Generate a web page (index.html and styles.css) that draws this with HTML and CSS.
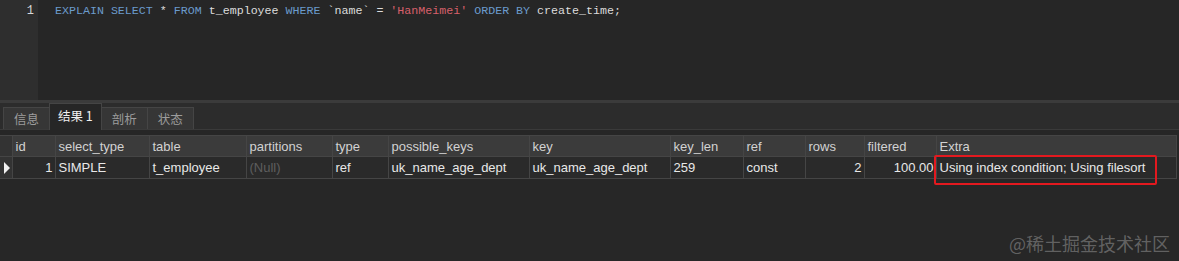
FILE: index.html
```html
<!DOCTYPE html>
<html lang="en">

<head>
  <meta charset="UTF-8">
  <meta name="viewport" content="width=device-width, initial-scale=1.0">
  <title>EXPLAIN</title>
  <link rel="stylesheet" href="styles.css">
</head>

<body>
  <div class="editor">
    <div class="gutter">1</div>
    <div class="code"><span class="kw">EXPLAIN SELECT</span> * <span class="kw">FROM</span> t_employee <span class="kw">WHERE</span> `name` = <span class="str">'HanMeimei'</span> <span class="kw">ORDER BY</span> create_time;</div>
  </div>
  <div class="splitter"></div>
  <div class="tabs">
    <div class="tab">信息</div>
    <div class="tab active">结果 1</div>
    <div class="tab">剖析</div>
    <div class="tab">状态</div>
  </div>
  <div class="result">
    <table class="grid">
      <colgroup>
        <col style="width: 12px">
        <col style="width: 43px">
        <col style="width: 94px">
        <col style="width: 97px">
        <col style="width: 86px">
        <col style="width: 56px">
        <col style="width: 141px">
        <col style="width: 141px">
        <col style="width: 73px">
        <col style="width: 62px">
        <col style="width: 59px">
        <col style="width: 72px">
        <col style="width: 240px">
      </colgroup>
      <thead>
        <tr>
          <th class="marker"></th>
          <th>id</th>
          <th>select_type</th>
          <th>table</th>
          <th>partitions</th>
          <th>type</th>
          <th>possible_keys</th>
          <th>key</th>
          <th>key_len</th>
          <th>ref</th>
          <th>rows</th>
          <th>filtered</th>
          <th>Extra</th>
        </tr>
      </thead>
      <tbody>
        <tr>
          <td class="marker"><span class="arrow"></span></td>
          <td class="num">1</td>
          <td>SIMPLE</td>
          <td>t_employee</td>
          <td class="null">(Null)</td>
          <td>ref</td>
          <td>uk_name_age_dept</td>
          <td>uk_name_age_dept</td>
          <td>259</td>
          <td>const</td>
          <td class="num">2</td>
          <td class="num">100.00</td>
          <td class="extra">Using index condition; Using filesort</td>
        </tr>
      </tbody>
    </table>
  </div>
  <div class="watermark">@稀土掘金技术社区</div>
</body>

</html>
```

FILE: styles.css
```css
html,
body {
  margin: 0;
  padding: 0;
  background-color: #272727;
  height: 261px;
  overflow: hidden;
  font-family: "Liberation Sans", "Noto Sans CJK SC", sans-serif;
}

* {
  box-sizing: border-box;
}

.editor {
  display: flex;
  height: 100px;
  background-color: #262626;
}

.gutter {
  width: 38px;
  padding: 3px 4px 0 0;
  background-color: #2e2e2e;
  color: #d8d8d8;
  font-family: "Liberation Mono", monospace;
  font-size: 12px;
  line-height: 16px;
  text-align: right;
}

.code {
  padding: 3px 0 0 17px;
  color: #dcdcdc;
  font-family: "Liberation Mono", monospace;
  font-size: 11.65px;
  line-height: 16px;
  white-space: pre;
}

.kw {
  color: #6b9bcc;
}

.str {
  color: #d7606b;
}

.splitter {
  height: 3px;
  background-color: #3b3b3b;
}

.tabs {
  display: flex;
  align-items: flex-end;
  height: 27px;
  padding-left: 3px;
  background-color: #2c2c2c;
  border-bottom: 1px solid #3a3a3a;
}

.tab {
  height: 22px;
  padding: 0 10px;
  background-color: #363636;
  border: 1px solid #454545;
  border-bottom: none;
  color: #9c9c9c;
  font-family: "Noto Sans CJK SC", sans-serif;
  font-size: 12.5px;
  line-height: 21px;
  margin-right: -1px;
}

.tab.active {
  height: 27px;
  margin-bottom: -1px;
  padding: 0 8px;
  background-color: #262626;
  color: #f0f0f0;
  line-height: 23px;
  position: relative;
  z-index: 1;
}

.result {
  padding-top: 5px;
  background-color: #262626;
}

.grid {
  border-collapse: collapse;
  table-layout: fixed;
  font-size: 13px;
}

.grid th,
.grid td {
  padding: 0 3px;
  text-align: left;
  white-space: nowrap;
  overflow: visible;
  border: 1px solid #454545;
}

.grid th {
  height: 21px;
  background-color: #3b3b3b;
  color: #d2d2d2;
  font-weight: normal;
}

.grid td {
  height: 22px;
  background-color: #2a2a2a;
  color: #e8e8e8;
}

.grid .marker {
  padding: 0;
  background-color: #333333;
  border-left: none;
}

.arrow {
  display: block;
  width: 0;
  height: 0;
  margin-left: 4px;
  border-top: 6px solid transparent;
  border-bottom: 6px solid transparent;
  border-left: 6px solid #f2f2f2;
}

.grid .num {
  text-align: right;
  padding-right: 2px;
}

.grid .null {
  color: #5e5e5e;
}

.extra {
  position: relative;
}

.extra::after {
  content: "";
  position: absolute;
  left: -3px;
  top: -2px;
  width: 219px;
  height: 26px;
  border: 2px solid #e3191f;
  border-radius: 2px;
}

.watermark {
  position: absolute;
  right: 9px;
  bottom: 7px;
  color: rgba(150, 150, 150, 0.55);
  font-family: "Noto Sans CJK SC", sans-serif;
  font-size: 18px;
  line-height: 22px;
}
```
